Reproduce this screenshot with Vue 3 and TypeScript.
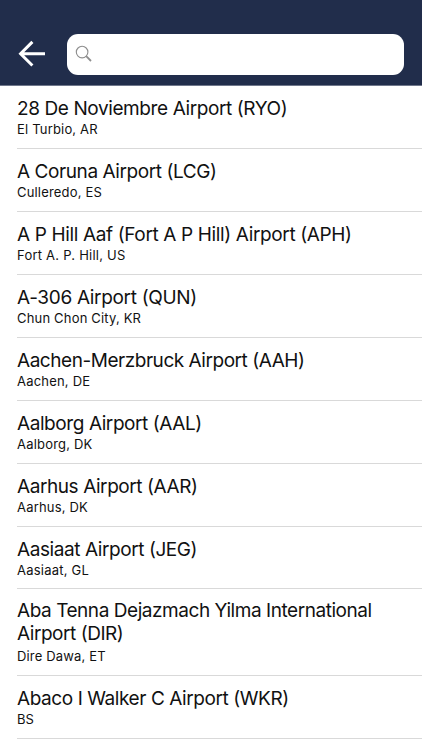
<script setup lang="ts">
interface Airport {
  name: string
  place: string
  nameTracking: number
  placeTracking: number
}

const airports: Airport[] = [
  { name: '28 De Noviembre Airport (RYO)', place: 'El Turbio, AR', nameTracking: -0.4, placeTracking: 0.18 },
  { name: 'A Coruna Airport (LCG)', place: 'Culleredo, ES', nameTracking: -0.42, placeTracking: 0.18 },
  { name: 'A P Hill Aaf (Fort A P Hill) Airport (APH)', place: 'Fort A. P. Hill, US', nameTracking: -0.36, placeTracking: 0.23 },
  { name: 'A-306 Airport (QUN)', place: 'Chun Chon City, KR', nameTracking: -0.32, placeTracking: 0.18 },
  { name: 'Aachen-Merzbruck Airport (AAH)', place: 'Aachen, DE', nameTracking: -0.46, placeTracking: 0.2 },
  { name: 'Aalborg Airport (AAL)', place: 'Aalborg, DK', nameTracking: -0.42, placeTracking: 0.2 },
  { name: 'Aarhus Airport (AAR)', place: 'Aarhus, DK', nameTracking: -0.42, placeTracking: 0.18 },
  { name: 'Aasiaat Airport (JEG)', place: 'Aasiaat, GL', nameTracking: -0.42, placeTracking: 0.22 },
  { name: 'Aba Tenna Dejazmach Yilma International Airport (DIR)', place: 'Dire Dawa, ET', nameTracking: -0.45, placeTracking: 0.16 },
  { name: 'Abaco I Walker C Airport (WKR)', place: 'BS', nameTracking: -0.42, placeTracking: 0.1 },
]
</script>

<template>
  <main class="screen">
    <header class="bar">
      <svg class="back" width="28" height="28" viewBox="0 0 28 28">
        <path d="M27 13.7H3M14.4 1.9L2.6 13.7L14.4 25.5" />
      </svg>
      <div class="search">
        <svg width="18" height="18" viewBox="0 0 18 18">
          <circle cx="6.1" cy="7.1" r="5.8" />
          <path class="handle" d="M10.2 11.2L15 16" />
        </svg>
      </div>
    </header>
    <ul class="list">
      <li v-for="a in airports" :key="a.name" class="row">
        <div class="name" :style="{ letterSpacing: a.nameTracking + 'px' }">{{ a.name }}</div>
        <div class="place" :style="{ letterSpacing: a.placeTracking + 'px' }">{{ a.place }}</div>
      </li>
    </ul>
  </main>
</template>

<style scoped>
.screen { width: 422px; height: 750px; overflow: hidden; background: #fff; font-family: Inter, "Liberation Sans", sans-serif; color: #111; }
.bar { box-sizing: border-box; height: 86px; padding: 34px 18px 0 18px; display: flex; background: #212d4b; border-bottom: 1px solid #6f778b; }
.back { margin-top: 6px; margin-right: 21px; fill: none; stroke: #fff; stroke-width: 3; }
.search { flex: 1; height: 40.5px; border-radius: 11px; background: #fff; padding: 11px 9px; box-sizing: border-box; }
.search svg { display: block; overflow: visible; fill: none; stroke: #8e8e8e; stroke-width: 1.1; }
.search .handle { stroke-width: 1.8; }
.list { list-style: none; margin: 0; padding: 0 0 0 17px; }
.row { box-sizing: border-box; height: 63px; padding-top: 11px; border-bottom: 1px solid #d9d9d9; }
.row:nth-child(8) { height: 62px; }
.row:nth-child(9) { height: 87px; padding-top: 10px; }
.row:nth-child(9) .name { margin-bottom: 2px; }
.name { width: 370px; font-size: 19px; line-height: 23px; }
.place { font-size: 13px; line-height: 18px; white-space: nowrap; }
</style>
